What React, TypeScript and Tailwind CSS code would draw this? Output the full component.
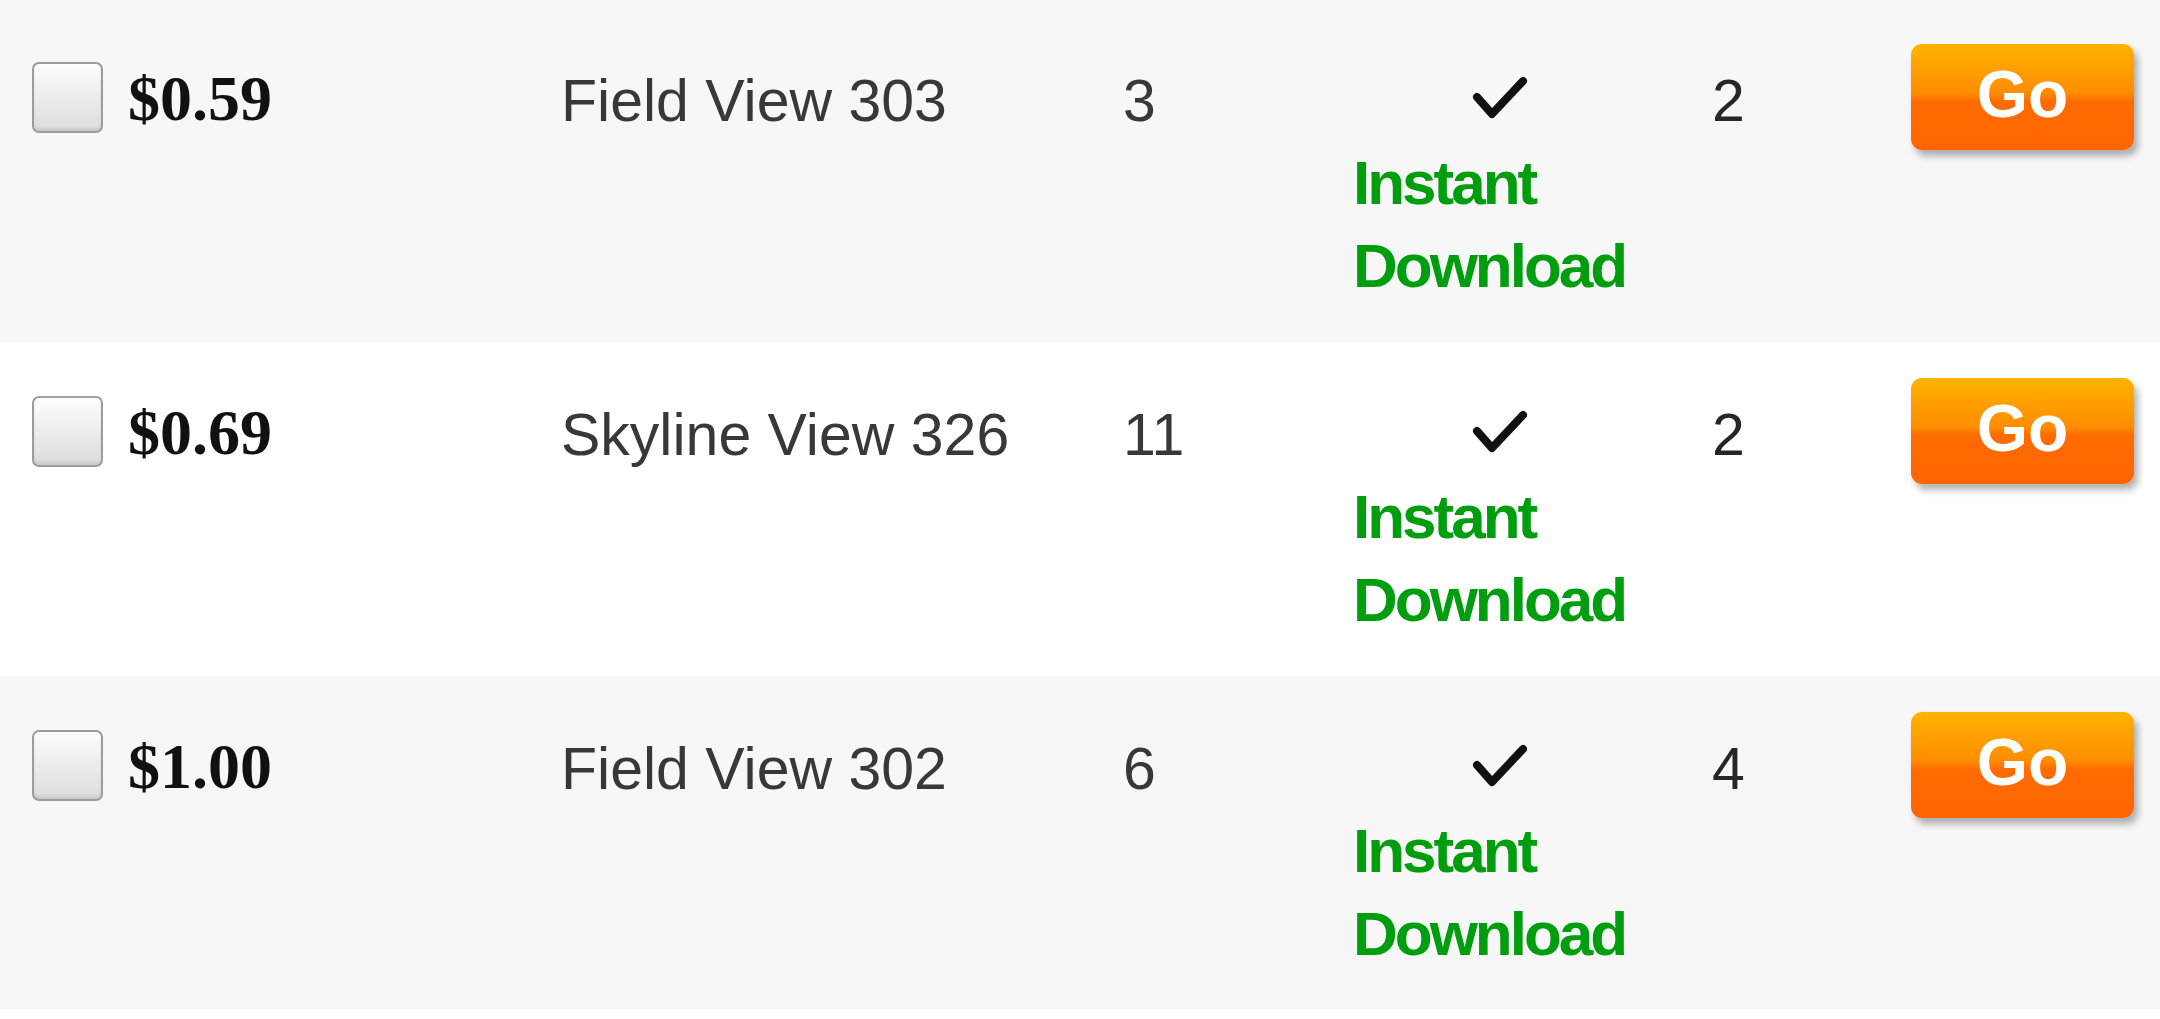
import React from 'react';

type Offer = { price: string; name: string; count: string; seller: string };

const OFFERS: Offer[] = [
  { price: '$0.59', name: 'Field View 303', count: '3', seller: '2' },
  { price: '$0.69', name: 'Skyline View 326', count: '11', seller: '2' },
  { price: '$1.00', name: 'Field View 302', count: '6', seller: '4' },
];

const sans = { fontFamily: '"Liberation Sans", Arial, sans-serif' };
const serif = { fontFamily: '"Liberation Serif", "Times New Roman", serif' };

function Check() {
  return (
    <svg width="59" height="45" viewBox="0 0 59 45" className="block">
      <path d="M7 21 L22 38 L53 5" fill="none" stroke="#111" strokeWidth="8" strokeLinecap="round" strokeLinejoin="round" />
    </svg>
  );
}

function OfferRow({ offer, index }: { offer: Offer; index: number }) {
  const rowCls =
    index === 0
      ? 'h-[342px] pt-[44px] bg-[#f7f7f7]'
      : index % 2 === 1
      ? 'h-[334px] pt-[36px] bg-white'
      : 'h-[333px] pt-[36px] bg-[#f7f7f7]';

  return (
    <div className={`flex items-start ${rowCls}`}>
      {/* checkbox */}
      <div className="w-[128px] shrink-0 pl-[32px] pt-[18px]">
        <div className="h-[71px] w-[71px] rounded-[7px] border-2 border-[#9c9c9c] bg-gradient-to-b from-[#fdfdfd] to-[#dcdcdc] shadow-[inset_0_-3px_3px_rgba(0,0,0,0.08)]" />
      </div>

      {/* price */}
      <div className="w-[433px] shrink-0 pt-[18px]">
        <span className="text-[64px] font-bold leading-[74px] text-[#111]" style={serif}>
          {offer.price}
        </span>
      </div>

      {/* name */}
      <div className="w-[562px] shrink-0 pt-[23px]">
        <span className="text-[59px] leading-[69px] text-[#383838]" style={sans}>
          {offer.name}
        </span>
      </div>

      {/* count */}
      <div className="w-[230px] shrink-0 pt-[23px]">
        <span className="text-[59px] leading-[69px] text-[#383838]" style={sans}>
          {offer.count}
        </span>
      </div>

      {/* availability */}
      <div className="w-[359px] shrink-0 pt-[32px]">
        <div className="pl-[117px]">
          <Check />
        </div>
        <div
          className="mt-[20px] text-[62px] font-bold leading-[83px] tracking-[-3px] text-[#009e0f]"
          style={sans}
        >
          Instant
          <br />
          Download
        </div>
      </div>

      {/* seller count */}
      <div className="w-[199px] shrink-0 pt-[23px]">
        <span className="text-[59px] leading-[69px] text-[#262626]" style={sans}>
          {offer.seller}
        </span>
      </div>

      {/* action */}
      <button
        className="flex h-[106px] w-[223px] shrink-0 items-start justify-center rounded-[11px] bg-[linear-gradient(to_bottom,#ffb300_0%,#ff8d00_46%,#ff6c00_54%,#ff6400_100%)] pt-[13px] text-[66px] font-bold leading-[74px] text-white shadow-[4px_6px_7px_rgba(0,0,0,0.3)]"
        style={sans}
      >
        Go
      </button>
    </div>
  );
}

export default function App() {
  return (
    <div className="min-h-screen w-[2160px] bg-white">
      {OFFERS.map((o, i) => (
        <OfferRow key={o.price} offer={o} index={i} />
      ))}
    </div>
  );
}
